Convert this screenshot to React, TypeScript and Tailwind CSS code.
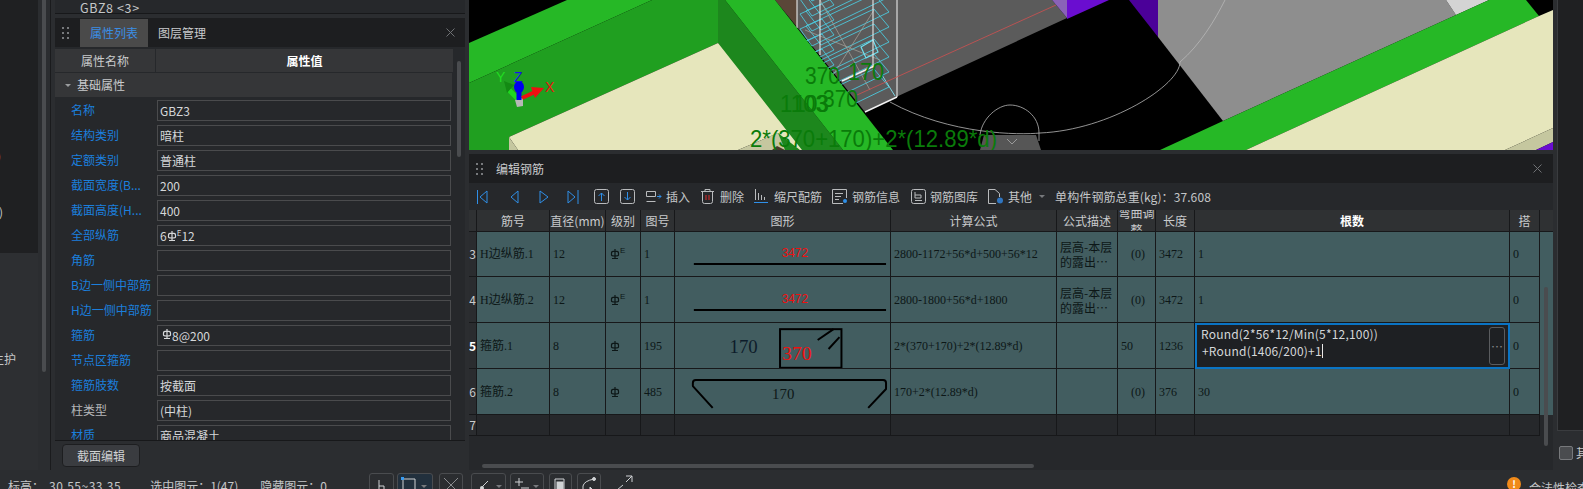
import React from "react";

const propRows = [
  { label: "名称", value: "GBZ3" },
  { label: "结构类别", value: "暗柱" },
  { label: "定额类别", value: "普通柱" },
  { label: "截面宽度(B...", value: "200" },
  { label: "截面高度(H...", value: "400" },
  { label: "全部纵筋", value: "all" },
  { label: "角筋", value: "" },
  { label: "B边一侧中部筋", value: "" },
  { label: "H边一侧中部筋", value: "" },
  { label: "箍筋", value: "stirrup" },
  { label: "节点区箍筋", value: "" },
  { label: "箍筋肢数", value: "按截面" },
  { label: "柱类型", value: "(中柱)", plain: true },
  { label: "材质", value: "商品混凝土" },
];

const gridCols =
  "grid grid-cols-[8px_73px_56px_35px_34px_216px_166px_61px_38px_39px_315px_30px]";

function Grade({ className = "" }: { className?: string }) {
  return (
    <svg width="10" height="12" viewBox="0 0 10 12" className={className} fill="none" stroke="currentColor">
      <path d="M5 1V10M1.500 7V5C1.500 3.600 3 3.200 5 3.200S8.500 3.600 8.500 5V7C8.500 7.800 7 8 5 8S1.500 7.800 1.500 7ZM2 10.500H8" strokeWidth="1.200" />
    </svg>
  );
}

function Dots() {
  return (
    <div className="grid grid-cols-2 gap-x-[3px] gap-y-[3px]">
      {[0, 1, 2, 3, 4, 5].map((i) => (
        <div key={i} className="h-[2px] w-[2px] bg-[#77797c]" />
      ))}
    </div>
  );
}

function Close({ className = "" }: { className?: string }) {
  return (
    <svg width="9" height="9" viewBox="0 0 9 9" stroke="#6f7174" className={className}>
      <path d="M0.500 0.500L8.500 8.500M8.500 0.500L0.500 8.500" />
    </svg>
  );
}

function Scene() {
  const stirrups = [-26, -11, 4, 19, 34, 49, 64, 79];
  return (
    <svg width="1084" height="150" viewBox="469 0 1084 150" className="block">
      <rect x="469" y="0" width="1084" height="150" fill="#000" />
      {/* column behind the wall */}
      <polygon points="775,0 797,0 797,27" fill="#5a4638" />
      <polygon points="797,0 1052,0 1067,18 896,97 865,112 797,27" fill="#5b5b5b" />
      <polygon points="1052,0 1067,0 1067,18" fill="#8a62b8" />
      <polygon points="1067,0 1109,0 1067,19" fill="#6a0dd0" />
      <polygon points="1129,0 1158,0 1158,37" fill="#4b0099" />
      <polygon points="1158,0 1446,0 1456,15 1223,121 1158,37" fill="#8e8e8e" />
      <polygon points="1446,0 1489,0 1456,15" fill="#d4d4d4" />
      {/* rebar cage */}
      {stirrups.map((y) => (
        <g key={y} fill="none" stroke="#4cc8dc" strokeWidth="0.9">
          <path d={`M806 ${y + 22}L874 ${y - 10}L889 ${y + 8}L821 ${y + 41}Z`} />
          <path d={`M800 ${y + 10}L822 ${y}L834 ${y + 16}L812 ${y + 27}Z`} />
        </g>
      ))}
      <path d="M820 0L870 90M874 10L830 80M805 30L880 60" stroke="#a8a39b" strokeWidth="0.7" fill="none" />
      <path d="M861 47L873 40L878 52L866 58Z" fill="none" stroke="#6fe0ef" strokeWidth="1.200" />
      <path d="M797 0V28M820 0V55M873 0V68M897 0V97" stroke="#e8e8e8" strokeWidth="1.100" />
      <path d="M865 112L897 97M842 81L874 66" stroke="#f2f2f2" strokeWidth="1.400" />
      <path d="M882 75L895 96" stroke="#7fd6e4" strokeWidth="1" />
      <path d="M857 95L1056 5" stroke="#d05050" strokeWidth="0.8" />
      {/* arcs */}
      <path d="M890 102C950 135 1020 135 1040 133C1110 130 1180 85 1180 62C1200 45 1215 20 1225 0" fill="none" stroke="#b8b8b8" strokeWidth="0.8" />
      <path d="M980 135C982 118 998 105 1010 105C1024 105 1039 116 1039 133V141" fill="none" stroke="#b8b8b8" strokeWidth="0.8" />
      {/* walls */}
      <polygon points="469,43 567,0 652,0 469,83" fill="#26b826" />
      <polygon points="469,83 652,0 718,0 718,43 509,137 509,150 469,150" fill="#209f20" />
      <polygon points="718,0 725,0 843,150 777,150 718,43" fill="#1d871d" />
      <polygon points="725,0 775,0 893,150 843,150" fill="#26b826" />
      <polygon points="718,43 509,137 518,150 738,150 778,133 800,150 802,150" fill="#e6e6bc" />
      <polygon points="509,137 518,150 509,150" fill="#c5c79f" />
      <polygon points="738,150 778,133 785,150" fill="#c5c79f" />
      <polygon points="772,150 777,146 785,150" fill="#4a3a2a" />
      <polygon points="1160,150 1223,121 1456,15 1489,0 1526,0 1539,16 1246,150" fill="#26b826" />
      <polygon points="1553,10 1553,128 1505,150 1246,150 1539,16" fill="#e6e6bc" />
      <polygon points="1553,128 1553,142 1536,150 1505,150" fill="#c5c79f" />
      <polygon points="1553,142 1553,150 1536,150" fill="#6a0dd0" />
      <polygon points="980,150 984,135 1036,135 1041,150" fill="#565656" />
      <path d="M1007 139L1012 144L1017 139" fill="none" stroke="#9a9a9a" />
      {/* dimension text */}
      <g fill="#0a7b0a" fontFamily="'Liberation Sans',sans-serif" fontSize="24">
        <text x="805" y="84" textLength="35" lengthAdjust="spacingAndGlyphs">370</text>
        <text x="848" y="80" textLength="36" lengthAdjust="spacingAndGlyphs">170</text>
        <text x="823" y="107" textLength="35" lengthAdjust="spacingAndGlyphs">370</text>
        <text x="780" y="112" textLength="48" lengthAdjust="spacingAndGlyphs">1103</text>
        <text x="794" y="112" textLength="35" lengthAdjust="spacingAndGlyphs">103</text>
        <text x="750" y="147" textLength="247" lengthAdjust="spacingAndGlyphs">2*(370+170)+2*(12.89*d)</text>
      </g>
      {/* axis gizmo */}
      <path d="M519 100L509 90" stroke="#1fd81f" strokeWidth="5" />
      <polygon points="504,81 514,85 507,93" fill="#138a13" />
      <polygon points="515,100 523,98 523,106 517,107" fill="#b8b8b8" />
      <path d="M519 100V90" stroke="#0000ee" strokeWidth="5" />
      <ellipse cx="519" cy="87" rx="5" ry="6" fill="#0000ee" />
      <path d="M522 98L535 92" stroke="#ee1111" strokeWidth="4" />
      <polygon points="544,88 531,87 535,98" fill="#ee1111" />
      <g fontFamily="'Liberation Sans',sans-serif" fontSize="14">
        <text x="496" y="82" fill="#22dd22">Y</text>
        <text x="514" y="82" fill="#1414ee">Z</text>
        <text x="545" y="92" fill="#ee1111">X</text>
      </g>
    </svg>
  );
}

function Nav({ d }: { d: string }) {
  return (
    <svg width="12" height="14" viewBox="0 0 12 14" fill="none" stroke="#2f8fe8">
      <path d={d} />
    </svg>
  );
}

function SquareArrow({ d }: { d: string }) {
  return (
    <svg width="15" height="15" viewBox="0 0 15 15" fill="none">
      <rect x="0.500" y="0.500" width="14" height="14" rx="2" stroke="#b9bbbd" />
      <path d={d} stroke="#2f8fe8" />
    </svg>
  );
}

function Toolbar() {
  return (
    <div className="flex h-[27px] items-center bg-[#26282b] pl-[8px] text-[12px] leading-none text-[#c4c6c8]">
      <Nav d="M0.500 0V14M10 1V13L3 7Z" />
      <div className="ml-[20px]"><Nav d="M9 1V13L2 7Z" /></div>
      <div className="ml-[17px]"><Nav d="M2 1V13L10 7Z" /></div>
      <div className="ml-[17px]"><Nav d="M11 0V14M1 1V13L8 7Z" /></div>
      <div className="ml-[15px]"><SquareArrow d="M7.500 12V4M4.500 7L7.500 4L10.500 7" /></div>
      <div className="ml-[11px]"><SquareArrow d="M7.500 3V11M4.500 8L7.500 11L10.500 8" /></div>
      <svg width="16" height="13" viewBox="0 0 16 13" fill="none" className="ml-[11px]">
        <path d="M0.500 1.500H9.500V6.500H0.500ZM0.500 11.500H9.500" stroke="#b9bbbd" />
        <path d="M11 6.500H15M13 4.500L15 6.500L13 8.500" stroke="#2f8fe8" />
      </svg>
      <span className="ml-[4px]">插入</span>
      <svg width="13" height="15" viewBox="0 0 13 15" fill="none" className="ml-[11px]">
        <path d="M0 2.500H13M4 2.500V0.500H9V2.500M1.500 2.500V12.500Q1.500 14.500 3.500 14.500H9.500Q11.500 14.500 11.500 12.500V2.500" stroke="#b9bbbd" />
        <path d="M5 6V11M8 6V11" stroke="#e02a2a" />
      </svg>
      <span className="ml-[6px]">删除</span>
      <svg width="14" height="15" viewBox="0 0 14 15" fill="none" className="ml-[10px]">
        <path d="M1.500 0V11M4.500 4V11M7.500 6V11M10.500 8V11" stroke="#b9bbbd" />
        <path d="M0 13.500H14" stroke="#2f8fe8" />
      </svg>
      <span className="ml-[6px]">缩尺配筋</span>
      <svg width="16" height="15" viewBox="0 0 16 15" fill="none" className="ml-[10px]">
        <path d="M11 14.500H0.500V0.500H14.500V9M3 4.500H11M3 7.500H9M3 10.500H7" stroke="#b9bbbd" />
        <circle cx="13" cy="12" r="2" fill="#2f8fe8" />
      </svg>
      <span className="ml-[4px]">钢筋信息</span>
      <svg width="15" height="15" viewBox="0 0 15 15" fill="none" className="ml-[11px]">
        <rect x="0.500" y="0.500" width="14" height="14" rx="2" stroke="#b9bbbd" />
        <path d="M4 3V9H10V6H4M4 11.500H11" stroke="#b9bbbd" />
      </svg>
      <span className="ml-[4px]">钢筋图库</span>
      <svg width="16" height="15" viewBox="0 0 16 15" fill="none" className="ml-[10px]">
        <path d="M8 14.500H0.500V0.500H7L11.500 4.500V8" stroke="#b9bbbd" />
        <circle cx="12" cy="11.500" r="3" fill="#2f75c0" />
      </svg>
      <span className="ml-[4px]">其他</span>
      <div className="ml-[7px] h-0 w-0 border-x-[3px] border-t-[3px] border-x-transparent border-t-[#77797c]" />
      <span className="ml-[10px] tracking-[0.1px]">单构件钢筋总重(kg)：37.608</span>
    </div>
  );
}

function HeadCell({ children, bold }: { children?: React.ReactNode; bold?: boolean }) {
  return (
    <div
      className={`flex items-center justify-center overflow-hidden border-r border-[#17181a] whitespace-nowrap text-[12px] leading-[16px] ${
        bold ? "font-bold text-white" : "text-[#c9cbcd]"
      }`}
    >
      {children}
    </div>
  );
}

function Cell({ children, className = "" }: { children?: React.ReactNode; className?: string }) {
  return (
    <div className={`flex items-center overflow-hidden border-r border-b border-[#17181a] pl-[3px] font-['Liberation_Serif','Noto_Sans_CJK_SC',serif] text-[12px] whitespace-nowrap text-[#0d1717] ${className}`}>
      {children}
    </div>
  );
}

function LongBar() {
  return (
    <svg width="214" height="44" viewBox="0 0 214 44">
      <text x="118" y="25" textAnchor="middle" fill="#f01010" fontFamily="'Liberation Mono',monospace" fontSize="12" textLength="27">3472</text>
      <path d="M16 32H210" stroke="#000" strokeWidth="2" />
    </svg>
  );
}

function Stirrup() {
  return (
    <svg width="214" height="44" viewBox="0 0 214 44" fill="none">
      <text x="52" y="29" fill="#0d1c2a" fontFamily="'Liberation Serif',serif" fontSize="19">170</text>
      <rect x="103" y="5" width="62" height="39" stroke="#000" strokeWidth="2" />
      <text x="105" y="36" fill="#f01010" fontFamily="'Liberation Serif',serif" fontSize="20">370</text>
      <path d="M141 16L157 5M152 25L163 13" stroke="#000" strokeWidth="2" />
    </svg>
  );
}

function Hook() {
  return (
    <svg width="214" height="44" viewBox="0 0 214 44" fill="none">
      <path d="M35 38L15 16V13Q15 10 18 10H207Q210 10 210 13V19L192 38" stroke="#000" strokeWidth="2" strokeLinejoin="round" />
      <text x="95" y="29" fill="#0d1717" fontFamily="'Liberation Serif',serif" fontSize="15">170</text>
    </svg>
  );
}

function RowNum({ n, bold }: { n: number; bold?: boolean }) {
  return (
    <div className={`flex items-center justify-center border-r border-b border-[#17181a] bg-[#2a2c2f] text-[12px] ${bold ? "font-bold text-white" : "text-[#c9cbcd]"}`}>
      {n}
    </div>
  );
}

function GradeCell({ sup }: { sup?: boolean }) {
  return (
    <Cell className="pl-[4px]">
      <Grade />
      {sup && <span className="-mt-[6px] font-['Liberation_Sans',sans-serif] text-[8px]">E</span>}
    </Cell>
  );
}

function Desc() {
  return (
    <Cell className="font-['Noto_Sans_CJK_SC',sans-serif] leading-[15px]">
      <div>层高-本层<br />的露出⋯</div>
    </Cell>
  );
}

function RebarTable() {
  return (
    <div className="flex-1 overflow-hidden">
      <div className={`${gridCols} h-[21px] bg-[#2f3133]`}>
        <HeadCell />
        <HeadCell>筋号</HeadCell>
        <HeadCell>直径(mm)</HeadCell>
        <HeadCell>级别</HeadCell>
        <HeadCell>图号</HeadCell>
        <HeadCell>图形</HeadCell>
        <HeadCell>计算公式</HeadCell>
        <HeadCell>公式描述</HeadCell>
        <div className="overflow-hidden border-r border-[#17181a] text-center text-[12px] leading-[17px] text-[#c9cbcd]">
          <div className="-mt-[6px]">弯曲调整</div>
        </div>
        <HeadCell>长度</HeadCell>
        <HeadCell bold>根数</HeadCell>
        <HeadCell>搭</HeadCell>
      </div>
      <div className={`${gridCols} h-[46px] border-t border-[#17181a] bg-[#425d60]`}>
        <RowNum n={3} />
        <Cell className="pl-0">H边纵筋.1</Cell>
        <Cell>12</Cell>
        <GradeCell sup />
        <Cell>1</Cell>
        <Cell className="pl-0"><LongBar /></Cell>
        <Cell>2800-1172+56*d+500+56*12</Cell>
        <Desc />
        <Cell className="justify-center pl-0">(0)</Cell>
        <Cell>3472</Cell>
        <Cell>1</Cell>
        <Cell>0</Cell>
      </div>
      <div className={`${gridCols} h-[46px] bg-[#425d60]`}>
        <RowNum n={4} />
        <Cell className="pl-0">H边纵筋.2</Cell>
        <Cell>12</Cell>
        <GradeCell sup />
        <Cell>1</Cell>
        <Cell className="pl-0"><LongBar /></Cell>
        <Cell>2800-1800+56*d+1800</Cell>
        <Desc />
        <Cell className="justify-center pl-0">(0)</Cell>
        <Cell>3472</Cell>
        <Cell>1</Cell>
        <Cell>0</Cell>
      </div>
      <div className={`${gridCols} h-[46px] bg-[#425d60]`}>
        <RowNum n={5} bold />
        <Cell className="pl-0">箍筋.1</Cell>
        <Cell>8</Cell>
        <GradeCell />
        <Cell>195</Cell>
        <Cell className="pl-0"><Stirrup /></Cell>
        <Cell>2*(370+170)+2*(12.89*d)</Cell>
        <Cell />
        <Cell>50</Cell>
        <Cell>1236</Cell>
        <div className="relative border-2 border-[#0a74c4] bg-[#1e2023] pl-[4px] font-['Noto_Sans_CJK_SC',sans-serif] text-[12px] leading-[17px] tracking-[0.2px] whitespace-nowrap text-[#d5d7d9]">
          <div>Round(2*56*12/Min(5*12,100))</div>
          <div className="flex items-center pl-[1px]">
            <span>+Round(1406/200)+1</span>
            <span className="h-[14px] w-px bg-[#e8e8e8]" />
          </div>
          <div className="absolute top-[2px] right-[3px] flex h-[38px] w-[16px] items-center justify-center rounded-[3px] border border-[#5a5c5f] text-[#8a8c8f]">⋯</div>
        </div>
        <Cell>0</Cell>
      </div>
      <div className={`${gridCols} h-[46px] bg-[#425d60]`}>
        <RowNum n={6} />
        <Cell className="pl-0">箍筋.2</Cell>
        <Cell>8</Cell>
        <GradeCell />
        <Cell>485</Cell>
        <Cell className="pl-0"><Hook /></Cell>
        <Cell>170+2*(12.89*d)</Cell>
        <Cell />
        <Cell className="justify-center pl-0">(0)</Cell>
        <Cell>376</Cell>
        <Cell>30</Cell>
        <Cell>0</Cell>
      </div>
      <div className={`${gridCols} h-[21px]`}>
        <RowNum n={7} />
        <Cell /><Cell /><Cell /><Cell /><Cell /><Cell /><Cell /><Cell /><Cell /><Cell /><Cell />
      </div>
    </div>
  );
}

function PropertyPanel() {
  return (
    <div className="flex w-[410px] shrink-0 flex-col">
      <div className="flex h-[14px] items-center border-b border-[#17181a] bg-[#26282b] pl-[25px] text-[12.500px] leading-[13px] tracking-[0.6px] text-[#c4c6c8]">
        <span className="pt-[1px]">GBZ8 &lt;3&gt;</span>
      </div>
      <div className="mt-[4px] flex min-h-0 flex-1 flex-col bg-[#26282b]">
        <div className="flex h-[29px] items-center bg-[#1d1e20] text-[12px]">
          <div className="ml-[7px]"><Dots /></div>
          <div className="ml-[11px] flex h-[28px] w-[68px] items-center justify-center bg-[#4a4a4a] text-[#3a8ee6]">属性列表</div>
          <div className="ml-[10px] text-[#c9cbcd]">图层管理</div>
          <Close className="mr-[10px] ml-auto" />
        </div>
        <div className="relative min-h-0 flex-1 overflow-hidden pt-[2px]">
          <div className="mr-[12px] flex h-[23px] items-center bg-[#353638] text-[12px] text-[#c9cbcd]">
            <div className="flex h-full w-[101px] items-center justify-center border-r border-[#26282b]">属性名称</div>
            <div className="flex-1 text-center font-bold text-white">属性值</div>
          </div>
          <div className="mt-[1px] mr-[13px] flex h-[24px] items-center bg-[#353638] text-[12px] text-[#c9cbcd]">
            <div className="mr-[6px] ml-[10px] h-0 w-0 border-x-[3px] border-t-[3px] border-x-transparent border-t-[#9a9c9e]" />
            基础属性
          </div>
          <div className="mt-[3px] mr-[14px] flex flex-col gap-[4px]">
            {propRows.map((r) => (
              <div key={r.label} className="flex h-[21px] items-center text-[12px] leading-[16px]">
                <div className={`w-[102px] shrink-0 pb-[1px] pl-[16px] whitespace-nowrap ${r.plain ? "text-[#b5b7b9]" : "text-[#1b7fdc]"}`}>{r.label}</div>
                <div className="flex h-full flex-1 items-center border border-[#4a4b4d] pl-[2px] text-[#d5d7d9]">
                  {r.value === "all" ? (
                    <>6<Grade /><span className="-mt-[6px] text-[8px] leading-none">E</span>12</>
                  ) : r.value === "stirrup" ? (
                    <><Grade className="-mt-[4px] ml-[2px]" />8@200</>
                  ) : (
                    r.value
                  )}
                </div>
              </div>
            ))}
          </div>
          {/* vertical scrollbar */}
          <div className="absolute top-[14px] right-[4px] h-[96px] w-[4px] rounded-full bg-[#4a4c4f]" />
        </div>
        <div className="flex h-[30px] items-center border-t border-[#17181a] bg-[#2b2d30] pl-[7px]">
          <div className="flex h-[23px] w-[78px] items-center justify-center rounded-[4px] border border-[#1d1e20] bg-[#3a3c40] text-[12px] text-[#d0d2d4]">截面编辑</div>
        </div>
      </div>
    </div>
  );
}

function StatusTool({ children, className = "" }: { children?: React.ReactNode; className?: string }) {
  return (
    <div className={`flex h-[24px] shrink-0 items-start justify-center rounded-[3px] border border-[#4a4c4f] pt-[3px] ${className}`}>
      {children}
    </div>
  );
}

function StatusBar() {
  return (
    <div className="flex h-[19px] shrink-0 overflow-hidden bg-[#2b2d30] text-[12px] leading-[16px] text-[#c4c6c8]">
      <div className="flex w-[369px] shrink-0 pt-[8px] pl-[8px]">
        <span>标高：</span>
        <span className="ml-[5px] tracking-[0.5px]">30.55~33.35</span>
        <span className="ml-[29px]">选中图元：1(47)</span>
        <span className="ml-[22px]">隐藏图元：0</span>
      </div>
      <div className="flex items-start pt-[3px]">
        <StatusTool className="w-[25px]">
          <svg width="12" height="14" viewBox="0 0 12 14" fill="none" stroke="#d0d2d4"><path d="M3 3V13M3 9H8V13" /></svg>
        </StatusTool>
        <StatusTool className="ml-[3px] w-[36px] border-[#2f8fe8] bg-[#22303d]">
          <svg width="28" height="14" viewBox="0 0 28 14" fill="none">
            <path d="M2 2H14V16M2 2V16" stroke="#d0d2d4" />
            <rect x="0" y="0" width="3" height="3" fill="#3a9bf0" />
            <path d="M20 8H26L23 11Z" fill="#77797c" />
          </svg>
        </StatusTool>
        <StatusTool className="ml-[6px] w-[24px]">
          <svg width="18" height="14" viewBox="0 0 18 14" stroke="#8a8c8f"><path d="M2 1L16 15M16 1L2 15" /></svg>
        </StatusTool>
        <StatusTool className="ml-[8px] w-[35px]">
          <svg width="28" height="14" viewBox="0 0 28 14" fill="none">
            <path d="M6 11L13 4" stroke="#d0d2d4" />
            <circle cx="7" cy="11" r="2" fill="#d0d2d4" />
            <path d="M21 8H27L24 11Z" fill="#77797c" />
          </svg>
        </StatusTool>
        <StatusTool className="ml-[4px] w-[34px]">
          <svg width="28" height="14" viewBox="0 0 28 14" fill="none" stroke="#d0d2d4">
            <path d="M2 5H10M6 1V9M8 11H16" />
            <path d="M20 8H26L23 11Z" fill="#77797c" stroke="none" />
          </svg>
        </StatusTool>
        <StatusTool className="ml-[5px] w-[23px]">
          <svg width="14" height="14" viewBox="0 0 14 14" fill="none" stroke="#d0d2d4"><path d="M1 2H10V14M1 2V14" /><rect x="3" y="5" width="6" height="9" fill="#d0d2d4" /></svg>
        </StatusTool>
        <StatusTool className="ml-[5px] w-[24px]">
          <svg width="16" height="14" viewBox="0 0 16 14" fill="none" stroke="#d0d2d4"><path d="M2 14V9Q3 4 13 2" /><circle cx="13" cy="2" r="1.500" fill="#d0d2d4" /><path d="M9 10L12 13L9 14Z" fill="#d0d2d4" /></svg>
        </StatusTool>
        <svg width="17" height="15" viewBox="0 0 17 15" fill="none" stroke="#d0d2d4" className="mt-[2px] ml-[15px]">
          <path d="M1 15L7 10M10 7L16 1M10 1H16V7" />
        </svg>
      </div>
      <div className="ml-auto flex w-[76px] pt-[7px]">
        <div className="flex h-[14px] w-[14px] shrink-0 items-center justify-center rounded-full bg-[#f08a1a] text-[10px] font-bold text-white">!</div>
        <span className="ml-[8px] pt-[3px] whitespace-nowrap">合法性检查</span>
      </div>
    </div>
  );
}

export default function App() {
  return (
    <div className="flex h-[489px] w-[1583px] flex-col overflow-hidden bg-[#2b2d30] font-['Noto_Sans_CJK_SC','Liberation_Sans',sans-serif]">
      <div className="flex h-[470px] shrink-0">
        {/* project tree, cut off by the crop */}
        <div className="relative w-[55px] shrink-0">
          <div className="h-[253px] w-[38px] overflow-hidden bg-[#1f2022] text-[12px] leading-[16px] text-[#c4c6c8]">
            <div className="mt-[148px] -ml-[3px] text-[#d79a3a]">)</div>
            <div className="mt-[40px] -ml-[1px]">)</div>
          </div>
          <div className="h-[217px] w-[38px] overflow-hidden bg-[#2d2f32] pt-[98px] text-[12px] leading-[16px] text-[#c4c6c8]">
            <div className="-ml-[8px]">主护</div>
          </div>
          <div className="absolute top-0 left-[42px] h-[372px] w-[4px] rounded-b-full bg-[#4a4c4f]" />
          <div className="absolute top-0 left-[50px] h-[470px] w-px bg-[#1a1b1d]" />
        </div>
        <PropertyPanel />
        <div className="ml-[4px] flex w-[1084px] shrink-0 flex-col">
          <div className="h-[150px] shrink-0"><Scene /></div>
          <div className="relative mt-[4px] flex min-h-0 flex-1 flex-col bg-[#26282b]">
            <div className="flex h-[29px] shrink-0 items-center bg-[#1d1e20] text-[12px] text-[#c9cbcd]">
              <div className="ml-[7px]"><Dots /></div>
              <span className="ml-[13px]">编辑钢筋</span>
              <Close className="mr-[11px] ml-auto" />
            </div>
            <Toolbar />
            <RebarTable />
            <div className="absolute top-[133px] right-[5px] h-[159px] w-[4px] rounded-full bg-[#4a4c4f]" />
            <div className="absolute top-[310px] left-[13px] h-[4px] w-[552px] rounded-full bg-[#4a4c4f]" />
          </div>
        </div>
        <div className="ml-[4px] flex min-w-0 flex-1 flex-col">
          <div className="h-[431px] border-b border-l border-[#3a3c3f] bg-[#1f2022]" />
          <div className="mt-[13px] flex items-center pl-[2px] text-[12px] text-[#c4c6c8]">
            <div className="h-[14px] w-[14px] shrink-0 rounded-[2px] border border-[#77797c] bg-[#4a4c4f]" />
            <span className="ml-[3px] whitespace-nowrap">其他</span>
          </div>
        </div>
      </div>
      <StatusBar />
    </div>
  );
}
